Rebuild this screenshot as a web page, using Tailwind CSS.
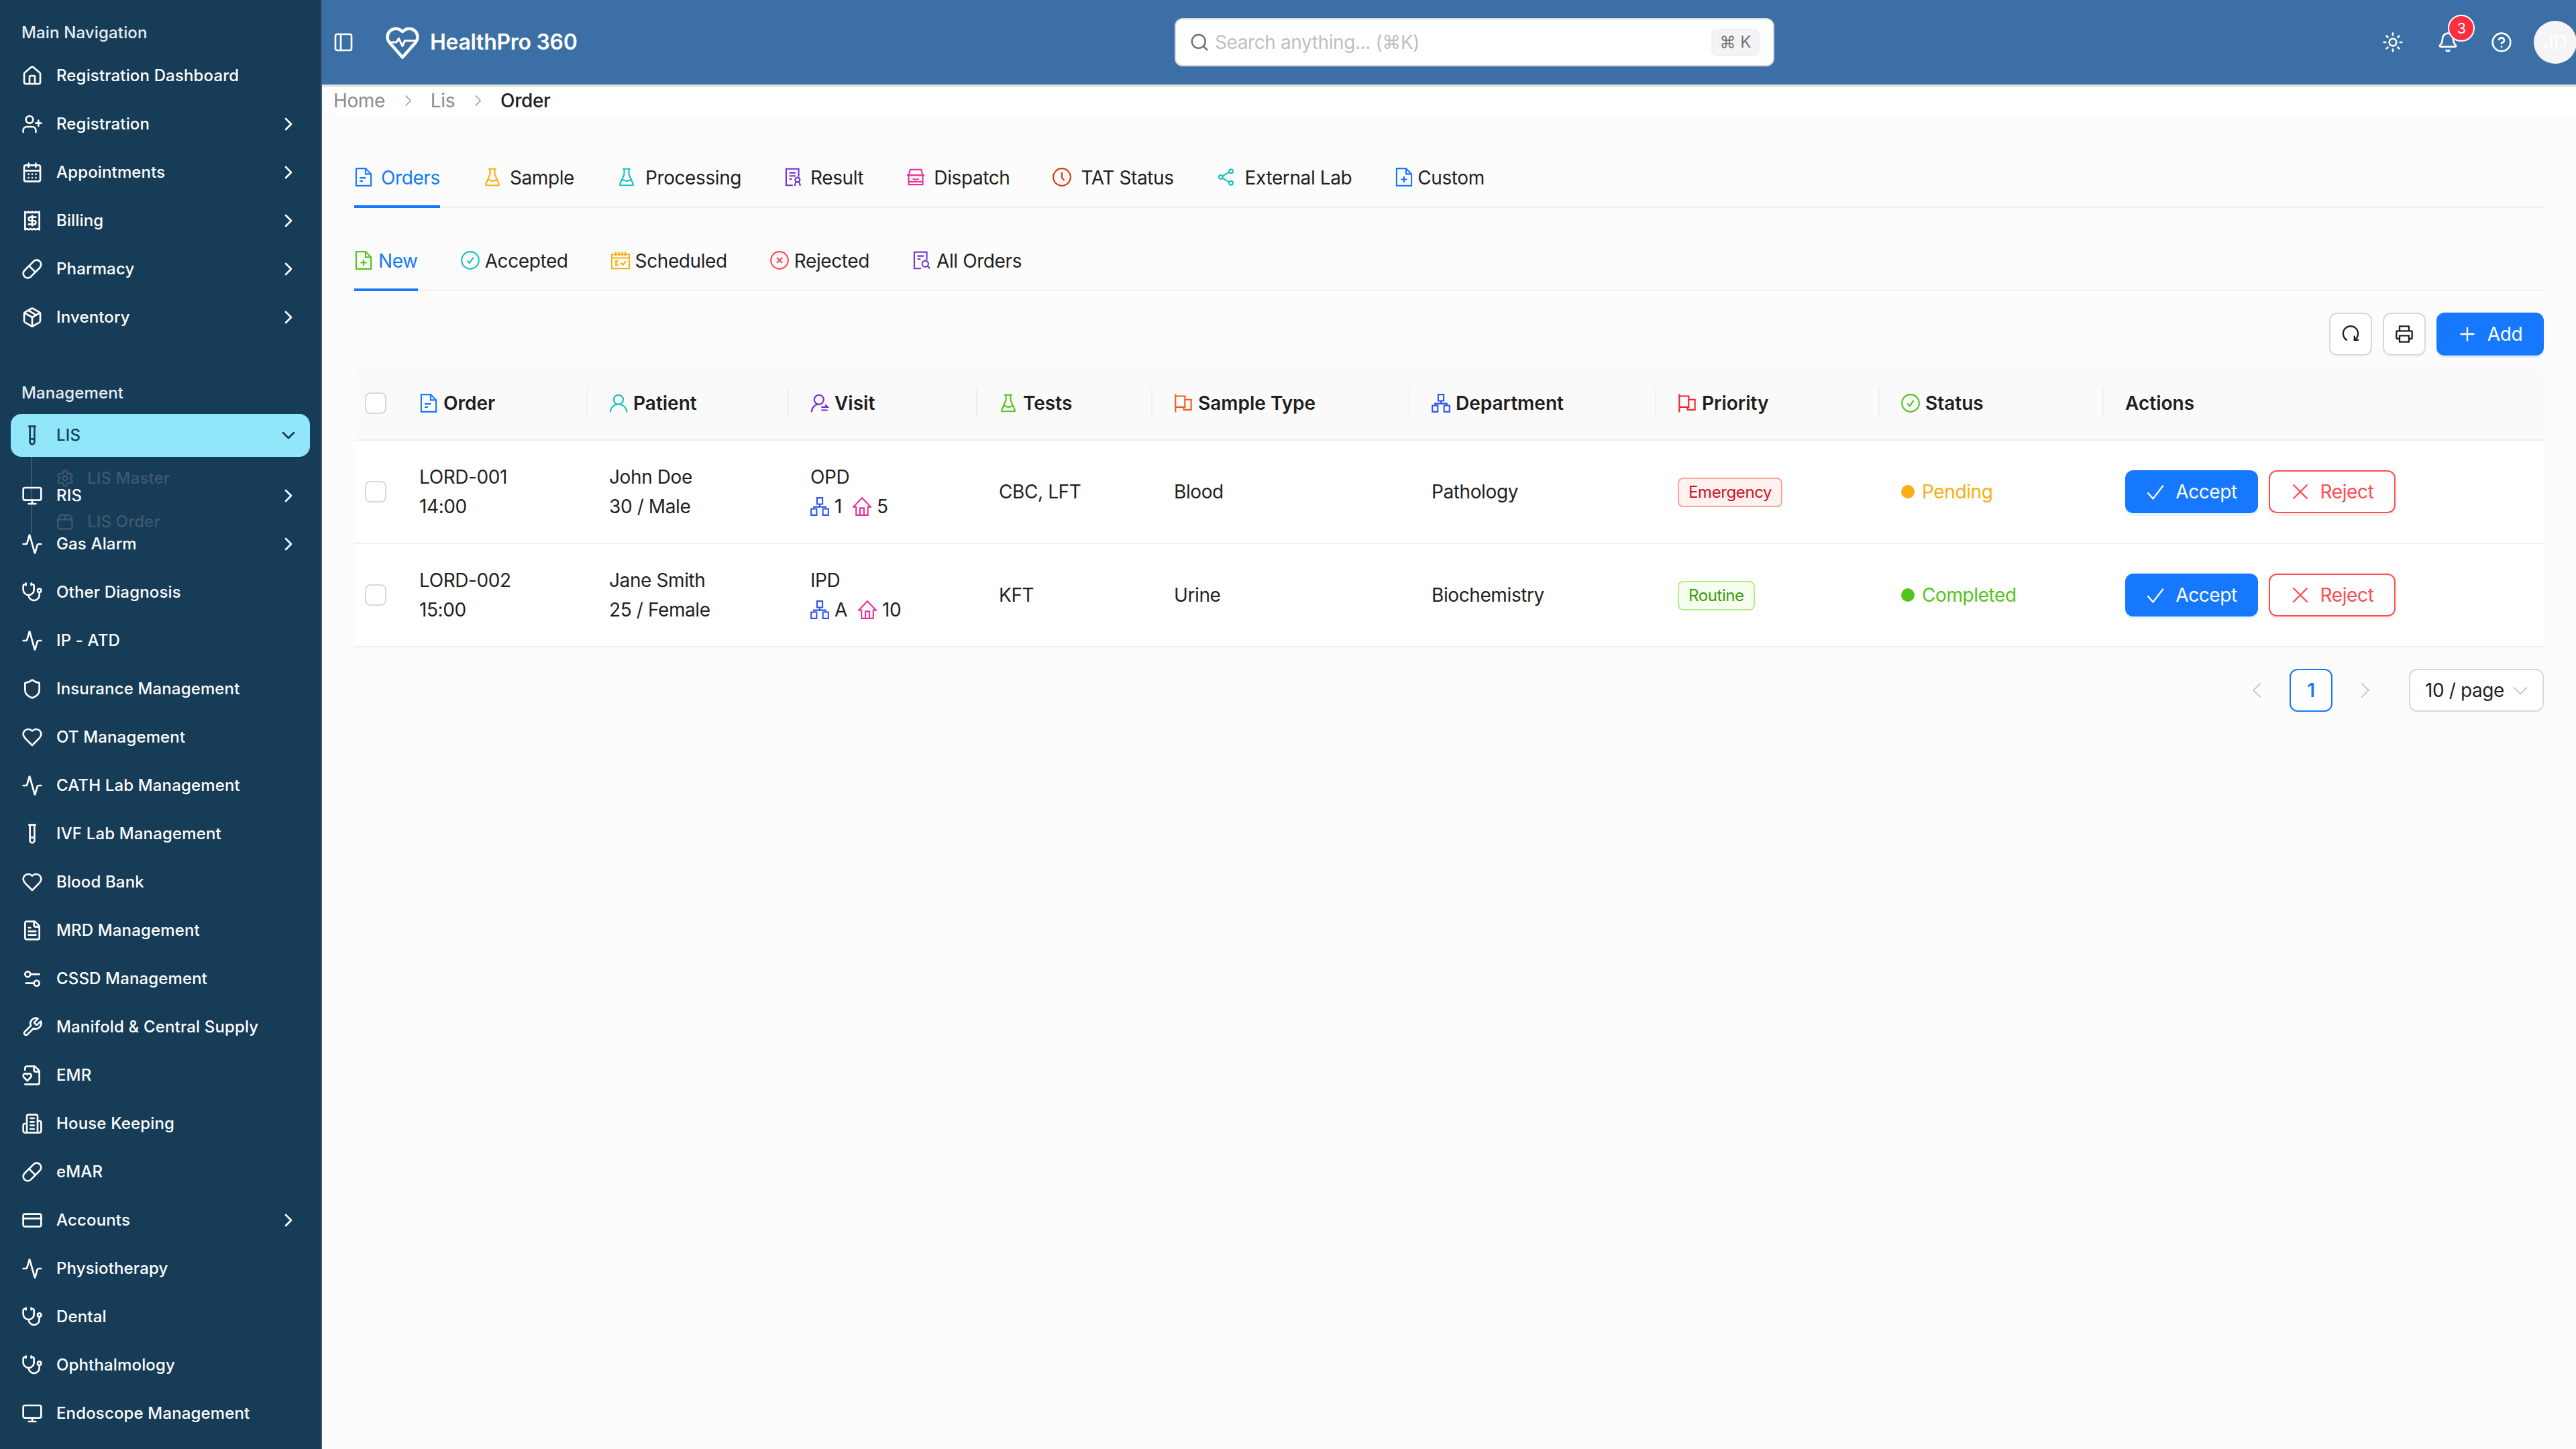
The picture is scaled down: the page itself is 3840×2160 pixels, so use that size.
<!DOCTYPE html>
<html>
<head>
<meta charset="utf-8">
<script src="https://cdn.jsdelivr.net/npm/@tailwindcss/browser@4"></script>
<title>HealthPro 360</title>
</head>
<body class="m-0 bg-[#fcfcfc] font-['Inter',sans-serif] text-[28px] text-[#1f1f1f]">
<svg class="hidden" xmlns="http://www.w3.org/2000/svg">
<defs>
<symbol id="i-home" viewBox="0 0 24 24"><path d="M15 21v-8a1 1 0 0 0-1-1h-4a1 1 0 0 0-1 1v8"/><path d="M3 10a2 2 0 0 1 .709-1.528l7-5.999a2 2 0 0 1 2.582 0l7 5.999A2 2 0 0 1 21 10v9a2 2 0 0 1-2 2H5a2 2 0 0 1-2-2z"/></symbol>
<symbol id="i-userplus" viewBox="0 0 24 24"><path d="M16 21v-2a4 4 0 0 0-4-4H6a4 4 0 0 0-4 4v2"/><circle cx="9" cy="7" r="4"/><path d="M19 8v6M22 11h-6"/></symbol>
<symbol id="i-cal" viewBox="0 0 24 24"><path d="M8 2v4M16 2v4"/><rect x="3" y="4" width="18" height="18" rx="2"/><path d="M3 10h18M8 14h.01M12 14h.01M16 14h.01M8 18h.01M12 18h.01M16 18h.01"/></symbol>
<symbol id="i-receipt" viewBox="0 0 24 24"><path d="M4 2v20l2-1 2 1 2-1 2 1 2-1 2 1 2-1 2 1V2l-2 1-2-1-2 1-2-1-2 1-2-1-2 1Z"/><path d="M16 8h-6a2 2 0 1 0 0 4h4a2 2 0 1 1 0 4H8"/><path d="M12 17.5v-11"/></symbol>
<symbol id="i-pill" viewBox="0 0 24 24"><path d="m10.5 20.5 10-10a4.95 4.95 0 1 0-7-7l-10 10a4.95 4.95 0 1 0 7 7Z"/><path d="m8.5 8.5 7 7"/></symbol>
<symbol id="i-package" viewBox="0 0 24 24"><path d="M11 21.73a2 2 0 0 0 2 0l7-4A2 2 0 0 0 21 16V8a2 2 0 0 0-1-1.73l-7-4a2 2 0 0 0-2 0l-7 4A2 2 0 0 0 3 8v8a2 2 0 0 0 1 1.73z"/><path d="M12 22V12"/><path d="m3.3 7 8.7 5 8.7-5"/><path d="m7.5 4.27 9 5.15"/></symbol>
<symbol id="i-tube" viewBox="0 0 24 24"><path d="M14.5 2v17.5c0 1.4-1.1 2.5-2.5 2.5c-1.4 0-2.5-1.1-2.5-2.5V2"/><path d="M8.5 2h7"/><path d="M14.5 16h-5"/></symbol>
<symbol id="i-monitor" viewBox="0 0 24 24"><rect x="2" y="3" width="20" height="14" rx="2"/><path d="M8 21h8M12 17v4"/></symbol>
<symbol id="i-activity" viewBox="0 0 24 24"><path d="M22 12h-2.48a2 2 0 0 0-1.93 1.46l-2.35 8.36a.25.25 0 0 1-.48 0L9.24 2.18a.25.25 0 0 0-.48 0l-2.35 8.36A2 2 0 0 1 4.49 12H2"/></symbol>
<symbol id="i-steth" viewBox="0 0 24 24"><path d="M11 2v2M5 2v2"/><path d="M5 3H4a2 2 0 0 0-2 2v4a6 6 0 0 0 12 0V5a2 2 0 0 0-2-2h-1"/><path d="M8 15a6 6 0 0 0 12 0v-3"/><circle cx="20" cy="10" r="2"/></symbol>
<symbol id="i-shield" viewBox="0 0 24 24"><path d="M20 13c0 5-3.5 7.5-7.66 8.95a1 1 0 0 1-.67-.01C7.5 20.5 4 18 4 13V6a1 1 0 0 1 1-1c2 0 4.5-1.2 6.24-2.72a1.17 1.17 0 0 1 1.52 0C14.51 3.81 17 5 19 5a1 1 0 0 1 1 1z"/></symbol>
<symbol id="i-heart" viewBox="0 0 24 24"><path d="M19 14c1.49-1.46 3-3.21 3-5.5A5.5 5.5 0 0 0 16.5 3c-1.76 0-3 .5-4.5 2-1.5-1.5-2.74-2-4.5-2A5.5 5.5 0 0 0 2 8.5c0 2.3 1.5 4.05 3 5.5l7 7Z"/></symbol>
<symbol id="i-file" viewBox="0 0 24 24"><path d="M15 2H6a2 2 0 0 0-2 2v16a2 2 0 0 0 2 2h12a2 2 0 0 0 2-2V7Z"/><path d="M14 2v4a2 2 0 0 0 2 2h4"/><path d="M10 9H8M16 13H8M16 17H8"/></symbol>
<symbol id="i-settings2" viewBox="0 0 24 24"><path d="M20 7h-9M14 17H5"/><circle cx="17" cy="17" r="3"/><circle cx="7" cy="7" r="3"/></symbol>
<symbol id="i-wrench" viewBox="0 0 24 24"><path d="M14.7 6.3a1 1 0 0 0 0 1.4l1.6 1.6a1 1 0 0 0 1.4 0l3.77-3.77a6 6 0 0 1-7.94 7.94l-6.91 6.91a2.12 2.12 0 0 1-3-3l6.91-6.91a6 6 0 0 1 7.94-7.94l-3.76 3.76z"/></symbol>
<symbol id="i-fileheart" viewBox="0 0 24 24"><path d="M4 22h14a2 2 0 0 0 2-2V7l-5-5H6a2 2 0 0 0-2 2v2"/><path d="M14 2v4a2 2 0 0 0 2 2h4"/><path d="M10.29 10.7a2.43 2.43 0 0 0-2.66-.52c-.29.12-.56.3-.78.53l-.35.34-.35-.34a2.43 2.43 0 0 0-2.65-.53c-.3.12-.56.3-.79.53-.95.94-1 2.53.2 3.74L6.5 18l3.6-3.55c1.2-1.21 1.14-2.8.19-3.74Z"/></symbol>
<symbol id="i-building" viewBox="0 0 24 24"><path d="M6 22V4a2 2 0 0 1 2-2h8a2 2 0 0 1 2 2v18Z"/><path d="M6 12H4a2 2 0 0 0-2 2v6a2 2 0 0 0 2 2h2"/><path d="M18 9h2a2 2 0 0 1 2 2v9a2 2 0 0 1-2 2h-2"/><path d="M10 6h4M10 10h4M10 14h4M10 18h4"/></symbol>
<symbol id="i-card" viewBox="0 0 24 24"><rect x="2" y="5" width="20" height="14" rx="2"/><path d="M2 10h20"/></symbol>
<symbol id="i-cog" viewBox="0 0 24 24"><path d="M12.22 2h-.44a2 2 0 0 0-2 2v.18a2 2 0 0 1-1 1.73l-.43.25a2 2 0 0 1-2 0l-.15-.08a2 2 0 0 0-2.73.73l-.22.38a2 2 0 0 0 .73 2.73l.15.1a2 2 0 0 1 1 1.72v.51a2 2 0 0 1-1 1.74l-.15.09a2 2 0 0 0-.73 2.73l.22.38a2 2 0 0 0 2.73.73l.15-.08a2 2 0 0 1 2 0l.43.25a2 2 0 0 1 1 1.73V20a2 2 0 0 0 2 2h.44a2 2 0 0 0 2-2v-.18a2 2 0 0 1 1-1.73l.43-.25a2 2 0 0 1 2 0l.15.08a2 2 0 0 0 2.73-.73l.22-.39a2 2 0 0 0-.73-2.73l-.15-.08a2 2 0 0 1-1-1.74v-.5a2 2 0 0 1 1-1.74l.15-.09a2 2 0 0 0 .73-2.73l-.22-.38a2 2 0 0 0-2.73-.73l-.15.08a2 2 0 0 1-2 0l-.43-.25a2 2 0 0 1-1-1.73V4a2 2 0 0 0-2-2z"/><circle cx="12" cy="12" r="3"/></symbol>
<symbol id="i-box" viewBox="0 0 24 24"><path d="M3 9h18v10a2 2 0 0 1-2 2H5a2 2 0 0 1-2-2V9Z"/><path d="m3 9 2.45-4.9A2 2 0 0 1 7.24 3h9.52a2 2 0 0 1 1.8 1.1L21 9"/><path d="M12 3v6"/></symbol>
<symbol id="i-right" viewBox="0 0 24 24"><path d="m9 18 6-6-6-6"/></symbol>
<symbol id="i-down" viewBox="0 0 24 24"><path d="m6 9 6 6 6-6"/></symbol>
<!-- thin outline icons used in tabs and table -->
<symbol id="t-doc" viewBox="0 0 24 24"><path d="M14.5 1H2.500v22h19V8z"/><path d="M14.500 1v7h7M7 13h8M7 17h4"/></symbol>
<symbol id="t-flask" viewBox="0 0 24 24"><path d="M7 1.500h10M9 1.500v7L3.500 21a1 1 0 0 0 1 1.500h15a1 1 0 0 0 1-1.500L15 8.500v-7"/><path d="M5.500 16c3-2 4 1 6.500 1s3.500-1.500 6-1.500M12 9h.01M13.500 12.500h.01"/></symbol>
<symbol id="t-result" viewBox="0 0 24 24"><path d="M11 22.500H2.500v-21h16v10"/><path d="M6.500 6.500h8M6.500 10.500h8M6.500 14.500h3"/><circle cx="17" cy="15.500" r="3"/><path d="m15 18-1.500 5M19 18l1.500 5"/></symbol>
<symbol id="t-car" viewBox="0 0 24 24"><path d="M3 21.500v-12l2-7h14l2 7v12zM3 18h18M.8 9.500h22.400"/><path d="M8 14c1.500 1.500 6.500 1.500 8 0M7 12h.01M17 12h.01"/></symbol>
<symbol id="t-clock" viewBox="0 0 24 24"><circle cx="12" cy="12" r="11"/><path d="M12 6v7l3 3"/></symbol>
<symbol id="t-share" viewBox="0 0 24 24"><circle cx="18" cy="4.500" r="2.500"/><circle cx="5" cy="12" r="2.500"/><circle cx="18" cy="19.500" r="2.500"/><path d="m7.200 10.700 8.600-5M7.200 13.300l8.600 5"/></symbol>
<symbol id="t-docadd" viewBox="0 0 24 24"><path d="M14.500 1H2.500v22h19V8z"/><path d="M14.500 1v7h7M12 11v8M8 15h8"/></symbol>
<symbol id="t-check" viewBox="0 0 24 24"><circle cx="12" cy="12" r="11"/><path d="m8 12.500 3 3 5-7"/></symbol>
<symbol id="t-sched" viewBox="0 0 24 24"><path d="M.8 4.500h22.400v18H.8zM6 1v5.500M10 1v5.500M14 1v5.500M18 1v5.500M.8 9h22.400"/><path d="M5 13h4M5 15.500h3M5 18h4M12 15l3 3 4-5"/></symbol>
<symbol id="t-xc" viewBox="0 0 24 24"><circle cx="12" cy="12" r="11"/><path d="m8.500 8.500 7 7M15.500 8.500l-7 7"/></symbol>
<symbol id="t-allorders" viewBox="0 0 24 24"><path d="M11 22.500H2.500v-21h16v10"/><path d="M6.500 6.500h8M6.500 10.500h4"/><circle cx="16.500" cy="16.500" r="4"/><path d="m19.500 19.500 3 3"/></symbol>
<symbol id="t-user" viewBox="0 0 24 24"><circle cx="12" cy="7.500" r="6"/><path d="M1.500 23.500c0-5.500 4.500-10 10.500-10s10.500 4.500 10.500 10"/></symbol>
<symbol id="t-swap" viewBox="0 0 24 24"><circle cx="11" cy="7.500" r="6"/><path d="M1.500 23.500c0-5.500 4-10 9.500-10M14 17h8l-3-3M22 21h-8"/></symbol>
<symbol id="t-flag" viewBox="0 0 24 24"><path d="M2 .5v23M2 3h12v14H2M14 7.500h8v13H12.500V17"/></symbol>
<symbol id="t-tree" viewBox="0 0 24 24"><path d="M8.500 1h7v8h-7zM1 15h7v8H1zM16 15h7v8h-7zM12 9v3.500M4.500 15v-2.500h15V15"/></symbol>
<symbol id="t-house" viewBox="0 0 24 24"><path d="M12 1 1 12.500h3.500v10.500h15V12.500H23z"/><path d="M9.500 23v-9h5v9"/></symbol>
</defs>
</svg>

<div class="flex min-h-[2160px] w-[3840px] overflow-hidden">
  <!-- Sidebar -->
  <aside class="h-[2160px] w-[480px] shrink-0 overflow-hidden border-r-2 border-[#e5e7eb]/20 bg-[#163c58] text-[24px] font-medium tracking-[0.15px] text-white">
    <div class="flex h-[77px] items-end px-[32px] pb-[12px] leading-[32px] text-[#e8eef3]">Main Navigation</div>
    <nav class="pl-[16px] pr-[16px]">
      <a class="flex h-[72px] items-center gap-[20px] pl-[16px]"><svg class="size-[32px] shrink-0 fill-none stroke-current stroke-2 [stroke-linecap:round] [stroke-linejoin:round]"><use href="#i-home"/></svg>Registration Dashboard</a>
      <a class="flex h-[72px] items-center gap-[20px] pl-[16px]"><svg class="size-[32px] shrink-0 fill-none stroke-current stroke-2 [stroke-linecap:round] [stroke-linejoin:round]"><use href="#i-userplus"/></svg><span class="flex-1">Registration</span><svg class="mr-[16px] size-[32px] fill-none stroke-current stroke-2 [stroke-linecap:round] [stroke-linejoin:round]"><use href="#i-right"/></svg></a>
      <a class="flex h-[72px] items-center gap-[20px] pl-[16px]"><svg class="size-[32px] shrink-0 fill-none stroke-current stroke-2 [stroke-linecap:round] [stroke-linejoin:round]"><use href="#i-cal"/></svg><span class="flex-1">Appointments</span><svg class="mr-[16px] size-[32px] fill-none stroke-current stroke-2 [stroke-linecap:round] [stroke-linejoin:round]"><use href="#i-right"/></svg></a>
      <a class="flex h-[72px] items-center gap-[20px] pl-[16px]"><svg class="size-[32px] shrink-0 fill-none stroke-current stroke-2 [stroke-linecap:round] [stroke-linejoin:round]"><use href="#i-receipt"/></svg><span class="flex-1">Billing</span><svg class="mr-[16px] size-[32px] fill-none stroke-current stroke-2 [stroke-linecap:round] [stroke-linejoin:round]"><use href="#i-right"/></svg></a>
      <a class="flex h-[72px] items-center gap-[20px] pl-[16px]"><svg class="size-[32px] shrink-0 fill-none stroke-current stroke-2 [stroke-linecap:round] [stroke-linejoin:round]"><use href="#i-pill"/></svg><span class="flex-1">Pharmacy</span><svg class="mr-[16px] size-[32px] fill-none stroke-current stroke-2 [stroke-linecap:round] [stroke-linejoin:round]"><use href="#i-right"/></svg></a>
      <a class="flex h-[72px] items-center gap-[20px] pl-[16px]"><svg class="size-[32px] shrink-0 fill-none stroke-current stroke-2 [stroke-linecap:round] [stroke-linejoin:round]"><use href="#i-package"/></svg><span class="flex-1">Inventory</span><svg class="mr-[16px] size-[32px] fill-none stroke-current stroke-2 [stroke-linecap:round] [stroke-linejoin:round]"><use href="#i-right"/></svg></a>
    </nav>
    <div class="mx-0 flex h-[108px] items-end px-[32px] pb-[15px] pt-0 leading-[32px] text-[#e8eef3]">Management</div>
    <nav class="relative px-[16px]">
      <a class="relative z-10 flex h-[64px] items-center gap-[20px] rounded-[16px] bg-[#91e6f9] pl-[16px] text-[#163c58]"><svg class="size-[32px] shrink-0 fill-none stroke-current stroke-2 [stroke-linecap:round] [stroke-linejoin:round]"><use href="#i-tube"/></svg><span class="flex-1">LIS</span><svg class="mr-[16px] size-[32px] fill-none stroke-current stroke-2 [stroke-linecap:round] [stroke-linejoin:round]"><use href="#i-down"/></svg></a>
      <!-- collapsing submenu, caught mid-animation under the next items -->
      <div class="absolute left-[46px] top-[64px] h-[115px] w-[2px] bg-white/15"></div>
      <div class="absolute left-[83px] top-[80px] flex h-[32px] items-center gap-[19px] text-[#40586e]"><svg class="size-[28px] fill-none stroke-current stroke-2 [stroke-linecap:round] [stroke-linejoin:round]"><use href="#i-cog"/></svg>LIS Master</div>
      <div class="absolute left-[83px] top-[145px] flex h-[32px] items-center gap-[19px] text-[#40586e]"><svg class="size-[28px] fill-none stroke-current stroke-2 [stroke-linecap:round] [stroke-linejoin:round]"><use href="#i-box"/></svg>LIS Order</div>
      <div class="relative mt-[22px]">
      <a class="flex h-[72px] items-center gap-[20px] pl-[16px]"><svg class="size-[32px] shrink-0 fill-none stroke-current stroke-2 [stroke-linecap:round] [stroke-linejoin:round]"><use href="#i-monitor"/></svg><span class="flex-1">RIS</span><svg class="mr-[16px] size-[32px] fill-none stroke-current stroke-2 [stroke-linecap:round] [stroke-linejoin:round]"><use href="#i-right"/></svg></a>
      <a class="flex h-[72px] items-center gap-[20px] pl-[16px]"><svg class="size-[32px] shrink-0 fill-none stroke-current stroke-2 [stroke-linecap:round] [stroke-linejoin:round]"><use href="#i-activity"/></svg><span class="flex-1">Gas Alarm</span><svg class="mr-[16px] size-[32px] fill-none stroke-current stroke-2 [stroke-linecap:round] [stroke-linejoin:round]"><use href="#i-right"/></svg></a>
      <a class="flex h-[72px] items-center gap-[20px] pl-[16px]"><svg class="size-[32px] shrink-0 fill-none stroke-current stroke-2 [stroke-linecap:round] [stroke-linejoin:round]"><use href="#i-steth"/></svg>Other Diagnosis</a>
      <a class="flex h-[72px] items-center gap-[20px] pl-[16px]"><svg class="size-[32px] shrink-0 fill-none stroke-current stroke-2 [stroke-linecap:round] [stroke-linejoin:round]"><use href="#i-activity"/></svg>IP - ATD</a>
      <a class="flex h-[72px] items-center gap-[20px] pl-[16px]"><svg class="size-[32px] shrink-0 fill-none stroke-current stroke-2 [stroke-linecap:round] [stroke-linejoin:round]"><use href="#i-shield"/></svg>Insurance Management</a>
      <a class="flex h-[72px] items-center gap-[20px] pl-[16px]"><svg class="size-[32px] shrink-0 fill-none stroke-current stroke-2 [stroke-linecap:round] [stroke-linejoin:round]"><use href="#i-heart"/></svg>OT Management</a>
      <a class="flex h-[72px] items-center gap-[20px] pl-[16px]"><svg class="size-[32px] shrink-0 fill-none stroke-current stroke-2 [stroke-linecap:round] [stroke-linejoin:round]"><use href="#i-activity"/></svg>CATH Lab Management</a>
      <a class="flex h-[72px] items-center gap-[20px] pl-[16px]"><svg class="size-[32px] shrink-0 fill-none stroke-current stroke-2 [stroke-linecap:round] [stroke-linejoin:round]"><use href="#i-tube"/></svg>IVF Lab Management</a>
      <a class="flex h-[72px] items-center gap-[20px] pl-[16px]"><svg class="size-[32px] shrink-0 fill-none stroke-current stroke-2 [stroke-linecap:round] [stroke-linejoin:round]"><use href="#i-heart"/></svg>Blood Bank</a>
      <a class="flex h-[72px] items-center gap-[20px] pl-[16px]"><svg class="size-[32px] shrink-0 fill-none stroke-current stroke-2 [stroke-linecap:round] [stroke-linejoin:round]"><use href="#i-file"/></svg>MRD Management</a>
      <a class="flex h-[72px] items-center gap-[20px] pl-[16px]"><svg class="size-[32px] shrink-0 fill-none stroke-current stroke-2 [stroke-linecap:round] [stroke-linejoin:round]"><use href="#i-settings2"/></svg>CSSD Management</a>
      <a class="flex h-[72px] items-center gap-[20px] pl-[16px]"><svg class="size-[32px] shrink-0 fill-none stroke-current stroke-2 [stroke-linecap:round] [stroke-linejoin:round]"><use href="#i-wrench"/></svg>Manifold &amp; Central Supply</a>
      <a class="flex h-[72px] items-center gap-[20px] pl-[16px]"><svg class="size-[32px] shrink-0 fill-none stroke-current stroke-2 [stroke-linecap:round] [stroke-linejoin:round]"><use href="#i-fileheart"/></svg>EMR</a>
      <a class="flex h-[72px] items-center gap-[20px] pl-[16px]"><svg class="size-[32px] shrink-0 fill-none stroke-current stroke-2 [stroke-linecap:round] [stroke-linejoin:round]"><use href="#i-building"/></svg>House Keeping</a>
      <a class="flex h-[72px] items-center gap-[20px] pl-[16px]"><svg class="size-[32px] shrink-0 fill-none stroke-current stroke-2 [stroke-linecap:round] [stroke-linejoin:round]"><use href="#i-pill"/></svg>eMAR</a>
      <a class="flex h-[72px] items-center gap-[20px] pl-[16px]"><svg class="size-[32px] shrink-0 fill-none stroke-current stroke-2 [stroke-linecap:round] [stroke-linejoin:round]"><use href="#i-card"/></svg><span class="flex-1">Accounts</span><svg class="mr-[16px] size-[32px] fill-none stroke-current stroke-2 [stroke-linecap:round] [stroke-linejoin:round]"><use href="#i-right"/></svg></a>
      <a class="flex h-[72px] items-center gap-[20px] pl-[16px]"><svg class="size-[32px] shrink-0 fill-none stroke-current stroke-2 [stroke-linecap:round] [stroke-linejoin:round]"><use href="#i-activity"/></svg>Physiotherapy</a>
      <a class="flex h-[72px] items-center gap-[20px] pl-[16px]"><svg class="size-[32px] shrink-0 fill-none stroke-current stroke-2 [stroke-linecap:round] [stroke-linejoin:round]"><use href="#i-steth"/></svg>Dental</a>
      <a class="flex h-[72px] items-center gap-[20px] pl-[16px]"><svg class="size-[32px] shrink-0 fill-none stroke-current stroke-2 [stroke-linecap:round] [stroke-linejoin:round]"><use href="#i-steth"/></svg>Ophthalmology</a>
      <a class="flex h-[72px] items-center gap-[20px] pl-[16px]"><svg class="size-[32px] shrink-0 fill-none stroke-current stroke-2 [stroke-linecap:round] [stroke-linejoin:round]"><use href="#i-monitor"/></svg>Endoscope Management</a>
      </div>
    </nav>
  </aside>

  <!-- Main -->
  <div class="flex min-w-0 flex-1 flex-col tracking-[-0.4px]">
    <header class="relative flex h-[130px] shrink-0 items-center border-b-4 border-[#e5e5e5] bg-[#3b6fa5] text-white">
      <svg class="ml-[16px] size-[32px] fill-none stroke-current stroke-2 [stroke-linecap:round] [stroke-linejoin:round]" viewBox="0 0 24 24"><rect x="3" y="3" width="18" height="18" rx="2"/><path d="M9 3v18"/></svg>
      <svg class="ml-[45px] size-[54px] fill-none stroke-current stroke-2 [stroke-linecap:round] [stroke-linejoin:round]" viewBox="0 0 24 24"><path d="M19 14c1.49-1.46 3-3.21 3-5.5A5.5 5.5 0 0 0 16.500 3c-1.760 0-3 .5-4.500 2-1.500-1.500-2.740-2-4.500-2A5.500 5.500 0 0 0 2 8.500c0 2.300 1.500 4.050 3 5.500l7 8z"/><path d="M3.500 12H8l1.500-2.500 2.500 5 1.500-3.500h7" stroke-width="1.400"/></svg>
      <span class="ml-[14px] text-[32px] font-semibold tracking-[-0.3px]">HealthPro 360</span>
      <div class="absolute left-[1271px] top-[27px] flex h-[72px] w-[894px] items-center rounded-[12px] border-2 border-[#d9d9d9] bg-white pl-[20px] pr-[20px]">
        <svg class="size-[30px] shrink-0 fill-none stroke-[#737373] stroke-2 [stroke-linecap:round]" viewBox="0 0 24 24"><path d="m21 21-4.340-4.340"/><circle cx="11" cy="11" r="8"/></svg>
        <span class="ml-[8px] flex-1 text-[#bfbfbf]">Search anything... (⌘K)</span>
        <span class="flex h-[40px] w-[72px] items-center justify-center gap-[8px] rounded-[8px] border-2 border-[#eef0f5] bg-[#f3f4f6] text-[24px] tracking-normal text-[#737373]">⌘ K</span>
      </div>
      <div class="absolute right-0 top-[31px] flex h-[64px] items-center">
        <svg class="mr-[50px] size-[32px] fill-none stroke-current stroke-2 [stroke-linecap:round]" viewBox="0 0 24 24"><circle cx="12" cy="12" r="4"/><path d="M12 2v2M12 20v2M4.930 4.930l1.410 1.410M17.660 17.660l1.410 1.410M2 12h2M20 12h2M6.340 17.660l-1.410 1.410M19.070 4.930l-1.410 1.410"/></svg>
        <div class="relative mr-[48px] size-[32px]">
          <svg class="size-[32px] fill-none stroke-current stroke-2 [stroke-linecap:round] [stroke-linejoin:round]" viewBox="0 0 24 24"><path d="M10.268 21a2 2 0 0 0 3.464 0"/><path d="M3.262 15.326A1 1 0 0 0 4 17h16a1 1 0 0 0 .74-1.673C19.410 13.956 18 12.499 18 8A6 6 0 0 0 6 8c0 4.499-1.411 5.956-2.738 7.326"/></svg>
          <span class="absolute left-[16px] top-[-25px] flex size-[40px] items-center justify-center rounded-full border-2 border-white bg-[#ff2e3f] text-[22px] leading-none text-white">3</span>
        </div>
        <svg class="mr-[31px] size-[32px] fill-none stroke-current stroke-2 [stroke-linecap:round] [stroke-linejoin:round]" viewBox="0 0 24 24"><circle cx="12" cy="12" r="10"/><path d="M9.090 9a3 3 0 0 1 5.830 1c0 2-3 3-3 3"/><path d="M12 17h.01"/></svg>
        <span class="flex size-[64px] translate-x-px items-center justify-center rounded-full bg-[#f5f5f5] text-[28px] text-white">JD</span>
      </div>
    </header>

    <div class="flex h-[40px] shrink-0 items-center bg-white pl-[17px] text-[#8c8c8c]">
      <span>Home</span>
      <svg class="mx-[24px] size-[20px] fill-none stroke-[#8c8c8c] stroke-[1.5]" viewBox="0 0 24 24"><path d="m8 3 9 9-9 9"/></svg>
      <span>Lis</span>
      <svg class="mx-[24px] size-[20px] fill-none stroke-[#8c8c8c] stroke-[1.5]" viewBox="0 0 24 24"><path d="m8 3 9 9-9 9"/></svg>
      <span class="font-medium text-[#1f1f1f]">Order</span>
    </div>

    <main class="flex-1 pl-[48px] pr-[48px]">
      <!-- Primary tabs -->
      <div class="mt-[70px] flex h-[70px] gap-[64px] border-b-2 border-[#f0f0f0]">
        <a class="-mb-[2px] flex items-start gap-[12px] border-b-4 border-[#1677ff] pt-[4px] text-[#1677ff]"><svg class="mt-[6px] size-[28px] fill-none stroke-[#1677ff] stroke-[1.8]"><use href="#t-doc"/></svg>Orders</a>
        <a class="flex items-start gap-[12px] pt-[4px]"><svg class="mt-[6px] size-[28px] fill-none stroke-[#faad14] stroke-[1.8]"><use href="#t-flask"/></svg>Sample</a>
        <a class="flex items-start gap-[14px] pt-[4px]"><svg class="mt-[6px] size-[28px] fill-none stroke-[#13c2c2] stroke-[1.8]"><use href="#t-flask"/></svg>Processing</a>
        <a class="flex items-start gap-[11px] pt-[4px]"><svg class="mt-[6px] size-[28px] fill-none stroke-[#722ed1] stroke-[1.8]"><use href="#t-result"/></svg>Result</a>
        <a class="flex items-start gap-[13px] pt-[4px]"><svg class="mt-[6px] size-[28px] fill-none stroke-[#eb2f96] stroke-[1.8]"><use href="#t-car"/></svg>Dispatch</a>
        <a class="flex items-start gap-[14px] pt-[4px]"><svg class="mt-[6px] size-[28px] fill-none stroke-[#d4380d] stroke-[1.8]"><use href="#t-clock"/></svg>TAT Status</a>
        <a class="flex items-start gap-[14px] pt-[4px]"><svg class="mt-[6px] size-[28px] fill-none stroke-[#13c2c2] stroke-[1.8]"><use href="#t-share"/></svg>External Lab</a>
        <a class="flex items-start gap-[6px] pt-[4px]"><svg class="mt-[6px] size-[28px] fill-none stroke-[#1677ff] stroke-[1.8]"><use href="#t-docadd"/></svg>Custom</a>
      </div>
      <!-- Secondary tabs -->
      <div class="mt-[54px] flex h-[70px] gap-[64px] border-b-2 border-[#f0f0f0]">
        <a class="-mb-[2px] flex items-start gap-[8px] border-b-4 border-[#1677ff] pt-[4px] text-[#1677ff]"><svg class="mt-[6px] size-[28px] fill-none stroke-[#52c41a] stroke-[1.8]"><use href="#t-docadd"/></svg>New</a>
        <a class="flex items-start gap-[8px] pt-[4px]"><svg class="mt-[6px] size-[28px] fill-none stroke-[#13c2c2] stroke-[1.8]"><use href="#t-check"/></svg>Accepted</a>
        <a class="flex items-start gap-[8px] pt-[4px]"><svg class="mt-[6px] size-[28px] fill-none stroke-[#faad14] stroke-[1.8]"><use href="#t-sched"/></svg>Scheduled</a>
        <a class="flex items-start gap-[8px] pt-[4px]"><svg class="mt-[6px] size-[28px] fill-none stroke-[#ff4d4f] stroke-[1.8]"><use href="#t-xc"/></svg>Rejected</a>
        <a class="flex items-start gap-[8px] pt-[4px]"><svg class="mt-[6px] size-[28px] fill-none stroke-[#722ed1] stroke-[1.8]"><use href="#t-allorders"/></svg>All Orders</a>
      </div>
      <!-- Toolbar -->
      <div class="mt-[32px] flex justify-end gap-[16px]">
        <button class="flex h-[64px] w-[64px] items-center justify-center rounded-[12px] border-2 border-[#d9d9d9] bg-white shadow-[0_4px_0_rgba(0,0,0,0.02)]"><svg class="size-[28px] fill-none stroke-[#1f1f1f] stroke-2 [stroke-linecap:round]" viewBox="0 0 24 24"><path d="M7 19.500A9.500 9.500 0 1 1 17 19.500"/><path d="M17 15v4.500h4.500"/></svg></button>
        <button class="flex h-[64px] w-[64px] items-center justify-center rounded-[12px] border-2 border-[#d9d9d9] bg-white shadow-[0_4px_0_rgba(0,0,0,0.02)]"><svg class="size-[28px] fill-none stroke-[#1f1f1f] stroke-2 [stroke-linejoin:round]" viewBox="0 0 24 24"><path d="M6 8V2h12v6M6 18H3a1 1 0 0 1-1-1v-8a1 1 0 0 1 1-1h18a1 1 0 0 1 1 1v8a1 1 0 0 1-1 1h-3"/><path d="M6 14h12v8H6zM17 11h.01"/></svg></button>
        <button class="flex h-[64px] w-[160px] items-center justify-center gap-[16px] rounded-[12px] bg-[#1677ff] text-white shadow-[0_4px_0_rgba(5,145,255,0.1)]"><svg class="size-[28px] fill-none stroke-white stroke-2" viewBox="0 0 24 24"><path d="M12 3v18M3 12h18"/></svg>Add</button>
      </div>
      <!-- Table -->
      <table class="mt-[16px] w-[3264px] table-fixed border-collapse">
        <colgroup>
          <col class="w-[65px]"><col class="w-[283px]"><col class="w-[300px]"><col class="w-[281px]"><col class="w-[261px]"><col class="w-[384px]"><col class="w-[367px]"><col class="w-[333px]"><col class="w-[334px]"><col>
        </colgroup>
        <thead>
          <tr class="h-[110px] border-b-2 border-[#f0f0f0] bg-[#fafafa] text-left font-semibold tracking-normal">
            <th class="rounded-tl-[16px] pl-[16px] align-middle"><span class="block size-[32px] rounded-[8px] border-2 border-[#d9d9d9] bg-white"></span></th>
            <th class="relative pl-[32px] font-semibold"><span class="flex items-center gap-[8px]"><svg class="size-[28px] fill-none stroke-[#1677ff] stroke-[1.8]"><use href="#t-doc"/></svg>Order</span><i class="absolute right-0 top-1/2 h-[44px] w-[2px] -translate-y-1/2 bg-[#f0f0f0]"></i></th>
            <th class="relative pl-[32px] font-semibold"><span class="flex items-center gap-[8px]"><svg class="size-[28px] fill-none stroke-[#13c2c2] stroke-[1.8]"><use href="#t-user"/></svg>Patient</span><i class="absolute right-0 top-1/2 h-[44px] w-[2px] -translate-y-1/2 bg-[#f0f0f0]"></i></th>
            <th class="relative pl-[32px] font-semibold"><span class="flex items-center gap-[8px]"><svg class="size-[28px] fill-none stroke-[#722ed1] stroke-[1.8]"><use href="#t-swap"/></svg>Visit</span><i class="absolute right-0 top-1/2 h-[44px] w-[2px] -translate-y-1/2 bg-[#f0f0f0]"></i></th>
            <th class="relative pl-[32px] font-semibold"><span class="flex items-center gap-[8px]"><svg class="size-[28px] fill-none stroke-[#52c41a] stroke-[1.8]"><use href="#t-flask"/></svg>Tests</span><i class="absolute right-0 top-1/2 h-[44px] w-[2px] -translate-y-1/2 bg-[#f0f0f0]"></i></th>
            <th class="relative pl-[32px] font-semibold"><span class="flex items-center gap-[8px]"><svg class="size-[28px] fill-none stroke-[#fa541c] stroke-[1.8]"><use href="#t-flag"/></svg>Sample Type</span><i class="absolute right-0 top-1/2 h-[44px] w-[2px] -translate-y-1/2 bg-[#f0f0f0]"></i></th>
            <th class="relative pl-[32px] font-semibold"><span class="flex items-center gap-[8px]"><svg class="size-[28px] fill-none stroke-[#2f54eb] stroke-[1.8]"><use href="#t-tree"/></svg>Department</span><i class="absolute right-0 top-1/2 h-[44px] w-[2px] -translate-y-1/2 bg-[#f0f0f0]"></i></th>
            <th class="relative pl-[32px] font-semibold"><span class="flex items-center gap-[8px]"><svg class="size-[28px] fill-none stroke-[#f5222d] stroke-[1.8]"><use href="#t-flag"/></svg>Priority</span><i class="absolute right-0 top-1/2 h-[44px] w-[2px] -translate-y-1/2 bg-[#f0f0f0]"></i></th>
            <th class="relative pl-[32px] font-semibold"><span class="flex items-center gap-[8px]"><svg class="size-[28px] fill-none stroke-[#52c41a] stroke-[1.8]"><use href="#t-check"/></svg>Status</span><i class="absolute right-0 top-1/2 h-[44px] w-[2px] -translate-y-1/2 bg-[#f0f0f0]"></i></th>
            <th class="rounded-tr-[16px] pl-[32px] font-semibold">Actions</th>
          </tr>
        </thead>
        <tbody class="bg-white">
          <tr class="h-[154px] border-b-2 border-[#f0f0f0]">
            <td class="pl-[16px]"><span class="block size-[32px] rounded-[8px] border-2 border-[#d9d9d9] bg-white"></span></td>
            <td class="pl-[32px] leading-[44px]">LORD-001<br>14:00</td>
            <td class="pl-[32px] leading-[44px]">John Doe<br>30 / Male</td>
            <td class="pl-[32px] leading-[44px]">OPD<br><span class="flex items-center gap-[8px]"><svg class="size-[28px] fill-none stroke-[#2f54eb] stroke-[1.8]"><use href="#t-tree"/></svg>1<svg class="ml-[8px] size-[28px] fill-none stroke-[#eb2f96] stroke-[1.8]"><use href="#t-house"/></svg>5</span></td>
            <td class="pl-[32px]">CBC, LFT</td>
            <td class="pl-[32px]">Blood</td>
            <td class="pl-[32px]">Pathology</td>
            <td class="pl-[32px]"><span class="inline-flex h-[44px] items-center rounded-[8px] border-2 border-[#ffa39e] bg-[#fff1f0] px-[14px] text-[24px] text-[#cf1322]">Emergency</span></td>
            <td class="pl-[32px] text-[#faad14]"><span class="flex items-center gap-[11px]"><i class="size-[20px] rounded-full bg-[#faad14]"></i>Pending</span></td>
            <td class="pl-[32px]"><div class="flex gap-[16px]">
              <button class="flex h-[64px] w-[198px] items-center justify-center gap-[16px] rounded-[12px] bg-[#1677ff] text-white shadow-[0_4px_0_rgba(5,145,255,0.1)]"><svg class="size-[28px] fill-none stroke-white stroke-2" viewBox="0 0 24 24"><path d="m2 13 7 8L22 4"/></svg>Accept</button>
              <button class="flex h-[64px] w-[189px] items-center justify-center gap-[16px] rounded-[12px] border-2 border-[#ff4d4f] bg-white text-[#ff4d4f] shadow-[0_4px_0_rgba(255,38,5,0.06)]"><svg class="size-[28px] fill-none stroke-[#ff4d4f] stroke-2" viewBox="0 0 24 24"><path d="m3 3 18 18M21 3 3 21"/></svg>Reject</button>
            </div></td>
          </tr>
          <tr class="h-[154px] border-b-2 border-[#f0f0f0]">
            <td class="pl-[16px]"><span class="block size-[32px] rounded-[8px] border-2 border-[#d9d9d9] bg-white"></span></td>
            <td class="pl-[32px] leading-[44px]">LORD-002<br>15:00</td>
            <td class="pl-[32px] leading-[44px]">Jane Smith<br>25 / Female</td>
            <td class="pl-[32px] leading-[44px]">IPD<br><span class="flex items-center gap-[8px]"><svg class="size-[28px] fill-none stroke-[#2f54eb] stroke-[1.8]"><use href="#t-tree"/></svg>A<svg class="ml-[8px] size-[28px] fill-none stroke-[#eb2f96] stroke-[1.8]"><use href="#t-house"/></svg>10</span></td>
            <td class="pl-[32px]">KFT</td>
            <td class="pl-[32px]">Urine</td>
            <td class="pl-[32px]">Biochemistry</td>
            <td class="pl-[32px]"><span class="inline-flex h-[44px] items-center rounded-[8px] border-2 border-[#b7eb8f] bg-[#f6ffed] px-[14px] text-[24px] text-[#389e0d]">Routine</span></td>
            <td class="pl-[32px] text-[#52c41a]"><span class="flex items-center gap-[11px]"><i class="size-[20px] rounded-full bg-[#52c41a]"></i>Completed</span></td>
            <td class="pl-[32px]"><div class="flex gap-[16px]">
              <button class="flex h-[64px] w-[198px] items-center justify-center gap-[16px] rounded-[12px] bg-[#1677ff] text-white shadow-[0_4px_0_rgba(5,145,255,0.1)]"><svg class="size-[28px] fill-none stroke-white stroke-2" viewBox="0 0 24 24"><path d="m2 13 7 8L22 4"/></svg>Accept</button>
              <button class="flex h-[64px] w-[189px] items-center justify-center gap-[16px] rounded-[12px] border-2 border-[#ff4d4f] bg-white text-[#ff4d4f] shadow-[0_4px_0_rgba(255,38,5,0.06)]"><svg class="size-[28px] fill-none stroke-[#ff4d4f] stroke-2" viewBox="0 0 24 24"><path d="m3 3 18 18M21 3 3 21"/></svg>Reject</button>
            </div></td>
          </tr>
        </tbody>
      </table>
      <!-- Pagination -->
      <div class="mt-[32px] flex items-center justify-end">
        <svg class="mr-[34px] size-[28px] fill-none stroke-[#bfbfbf] stroke-[1.5]" viewBox="0 0 24 24"><path d="m16 3-9 9 9 9"/></svg>
        <span class="flex h-[64px] w-[64px] items-center justify-center rounded-[12px] border-2 border-[#1677ff] bg-white font-semibold text-[#1677ff]">1</span>
        <svg class="ml-[34px] mr-[52px] size-[28px] fill-none stroke-[#bfbfbf] stroke-[1.5]" viewBox="0 0 24 24"><path d="m8 3 9 9-9 9"/></svg>
        <span class="flex h-[64px] w-[201px] items-center justify-between rounded-[12px] border-2 border-[#d9d9d9] bg-white pl-[22px] pr-[20px]">10 / page<svg class="size-[26px] fill-none stroke-[#bfbfbf] stroke-[1.5]" viewBox="0 0 24 24"><path d="m3 8 9 9 9-9"/></svg></span>
      </div>
    </main>
  </div>
</div>
</body>
</html>
